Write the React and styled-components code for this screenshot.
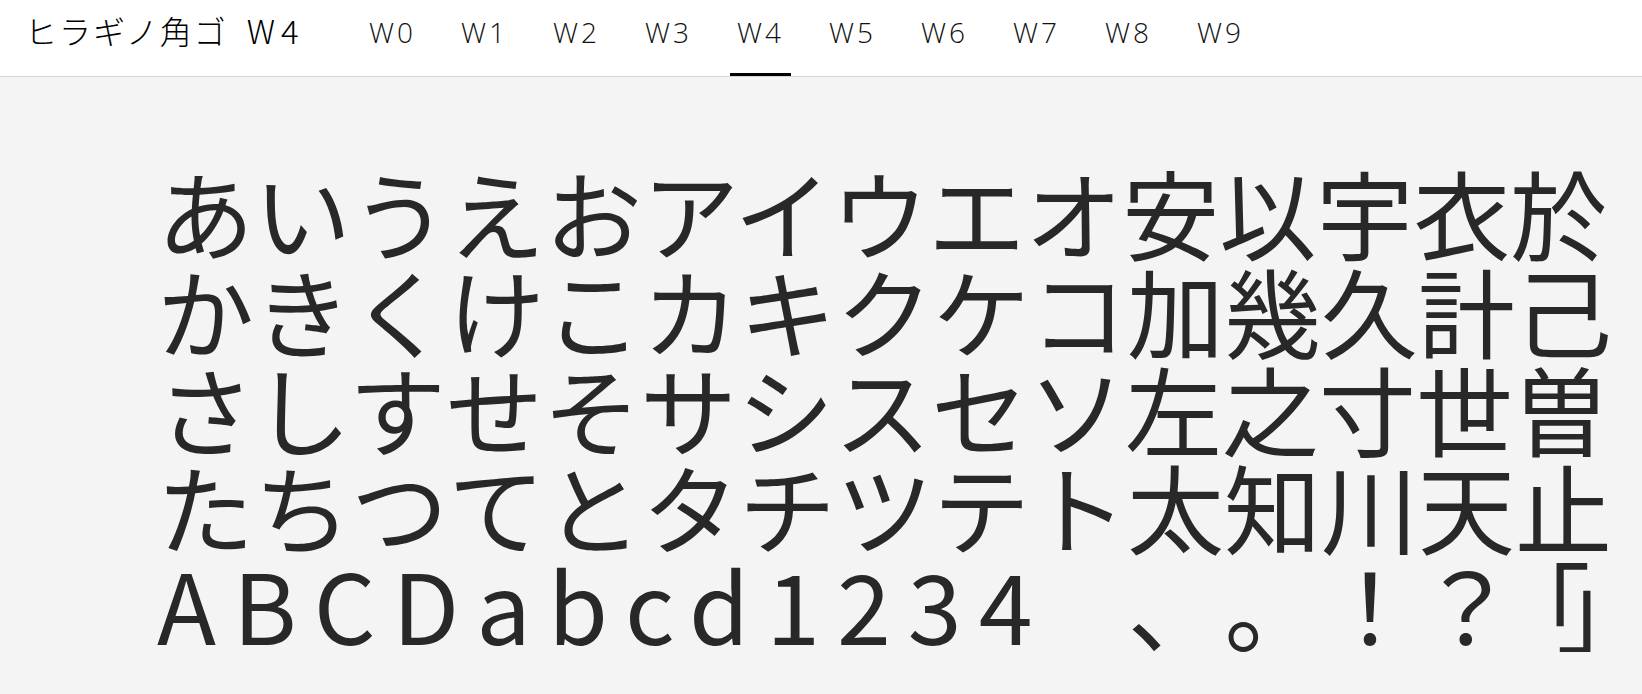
import React from 'react';
import styled, { createGlobalStyle } from 'styled-components';

const GlobalStyle = createGlobalStyle`
  html, body {
    margin: 0;
    padding: 0;
    background: #f4f4f4;
  }

  body {
    font-family: "Noto Sans CJK JP", sans-serif;
    color: #282828;
  }
`;

const weights = ['W0', 'W1', 'W2', 'W3', 'W4', 'W5', 'W6', 'W7', 'W8', 'W9'];

// Sample rows of the specimen, the last one is built by hand below
const rows = [
  'あいうえおアイウエオ安以宇衣於',
  'かきくけこカキクケコ加幾久計己',
  'さしすせそサシスセソ左之寸世曽',
  'たちつてとタチツテト太知川天止',
];

function App() {
  return (
    <>
      <GlobalStyle />
      <Header>
        <Title>
          ヒラギノ角ゴ<TitleWeight>W4</TitleWeight>
        </Title>
        <Tabs>
          {weights.map((w) => (
            <Tab key={w} $active={w === 'W4'}>
              {w}
            </Tab>
          ))}
        </Tabs>
      </Header>

      <Specimen>
        {rows.map((row) => (
          <Line key={row}>{row}</Line>
        ))}
        <Line>
          <Latin>ABCDabcd1234</Latin>
          <Gap>{'\u3000'}</Gap>
          、。！？
          <OpenBracket>「</OpenBracket>」
        </Line>
      </Specimen>
    </>
  );
}

export default App;

const Header = styled.header`
  display: flex;
  align-items: stretch;
  height: 77px;
  box-sizing: border-box;
  background-color: #fff;
  border-bottom: 1px solid #d4d4d4;
`;

const Title = styled.h1`
  flex: 0 0 362px;
  box-sizing: border-box;
  margin: 0;
  padding: 14px 0 0 25px;
  font-family: "Noto Sans CJK JP", sans-serif;
  font-size: 32px;
  line-height: 32px;
  font-weight: 300;
  letter-spacing: 2px;
  color: #000;
  white-space: nowrap;
`;

const TitleWeight = styled.span`
  margin-left: 19px;
  font-size: 33px;
  letter-spacing: 6px;
`;

const Tabs = styled.nav`
  display: flex;
  gap: 31px;
`;

const Tab = styled.div`
  position: relative;
  width: 61px;
  box-sizing: border-box;
  padding-top: 18px;
  text-align: center;
  font-family: "Open Sans", sans-serif;
  font-size: 28px;
  line-height: 28px;
  font-weight: 300;
  letter-spacing: 3px;
  color: #111;
  cursor: pointer;

  &::after {
    content: '';
    display: ${(p) => (p.$active ? 'block' : 'none')};
    position: absolute;
    left: 0;
    right: 0;
    bottom: 0;
    height: 3px;
    background-color: #000;
  }
`;

const Specimen = styled.main`
  padding: 85px 0 0 157px;
  font-size: 97px;
  line-height: 98px;
  color: #282828;
  white-space: nowrap;
  text-spacing-trim: space-all;
`;

const Line = styled.div``;

const Latin = styled.span`
  letter-spacing: 17px;
`;

const Gap = styled.span`
  display: inline-block;
  width: 78px;
`;

const OpenBracket = styled.span`
  margin-left: -22px;
  letter-spacing: -34px;
`;
